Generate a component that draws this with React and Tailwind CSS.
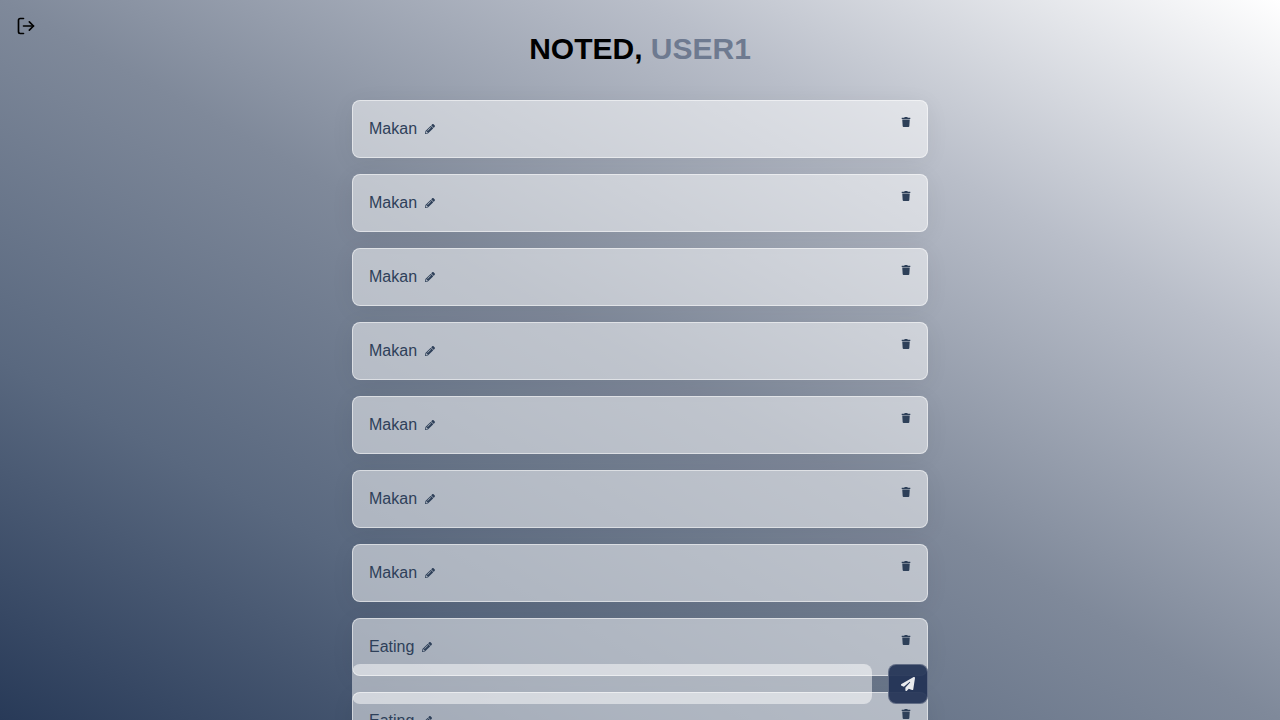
import React from 'react';
import { FiLogOut } from 'react-icons/fi';
import { FaPencilAlt, FaTrash } from 'react-icons/fa';
import { FaPaperPlane } from 'react-icons/fa6';

const notes = ['Makan', 'Makan', 'Makan', 'Makan', 'Makan', 'Makan', 'Makan', 'Eating', 'Eating'];

function Note({ text }) {
  return (
    <li className="flex h-[58px] shrink-0 items-start justify-between rounded-lg border border-white/50 bg-white/50 p-4 text-[#2e4059] shadow-[0_4px_24px_rgba(0,0,0,0.06)]">
      <div className="flex items-center gap-2">
        <span className="text-base leading-6">{text}</span>
        <button type="button" aria-label="Edit note">
          <FaPencilAlt size={10} />
        </button>
      </div>
      <button type="button" aria-label="Delete note">
        <FaTrash size={10} />
      </button>
    </li>
  );
}

export default function App() {
  return (
    <div className="relative flex h-screen flex-col items-center overflow-hidden bg-[linear-gradient(to_top_right,#283a58,#59687f_25%,#7f899a_50%,#b9bec9_75%,#ffffff)] font-['Liberation_Sans',Arial,sans-serif]">
      <button type="button" aria-label="Log out" className="absolute top-4 left-4 text-black">
        <FiLogOut size={20} />
      </button>
      <h1 className="mt-[31px] text-[30px] leading-9 font-bold text-black">
        NOTED, <span className="text-[#6e7a90]">USER1</span>
      </h1>
      <ul className="mt-[33px] flex w-[576px] flex-col gap-4">
        {notes.map((text, i) => (
          <Note key={i} text={text} />
        ))}
      </ul>
      <form className="absolute bottom-4 flex w-[576px] gap-4" onSubmit={(e) => e.preventDefault()}>
        <input aria-label="New note" className="h-10 min-w-0 flex-1 rounded-lg bg-white/50 px-4 outline-none" />
        <button
          type="submit"
          aria-label="Add note"
          className="flex size-10 items-center justify-center rounded-lg border border-white/25 bg-[#223355]/93 text-white/90"
        >
          <FaPaperPlane size={14} />
        </button>
      </form>
    </div>
  );
}
